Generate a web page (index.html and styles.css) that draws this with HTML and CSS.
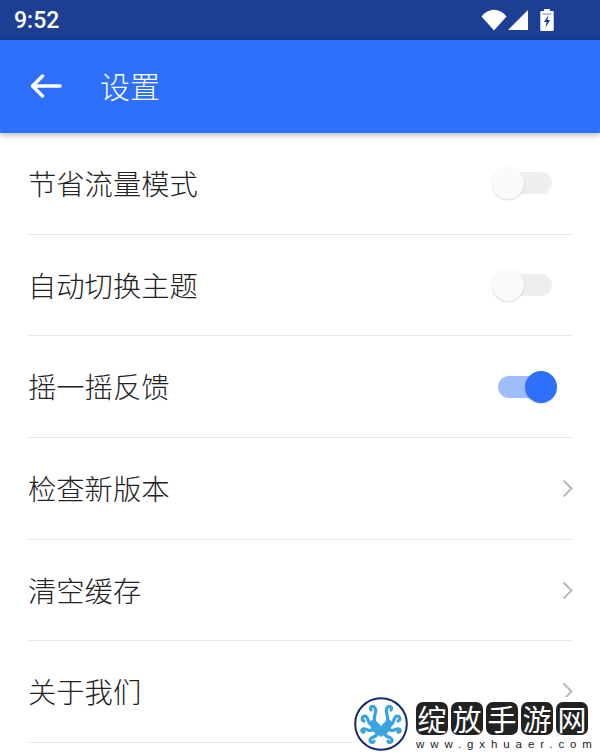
FILE: index.html
```html
<!DOCTYPE html>
<html lang="zh-CN">
<head>
    <meta charset="UTF-8">
    <meta name="viewport" content="width=device-width, initial-scale=1.0">
    <title>设置</title>
    <link rel="stylesheet" href="styles.css">
</head>
<body>
    <div class="screen">
        <div class="status-bar">
            <span class="time">9:52</span>
            <div class="status-icons">
                <svg class="icon-wifi" width="26" height="22" viewBox="0 0 26 22">
                    <path d="M0.5 7.5C7.5 -1.5 18.5 -1.5 25.5 7.5L13 21.5Z" fill="#fff"/>
                </svg>
                <svg class="icon-signal" width="22" height="22" viewBox="0 0 22 22">
                    <path d="M21 1V21H1Z" fill="#fff"/>
                </svg>
                <svg class="icon-battery" width="14" height="22" viewBox="0 0 14 23">
                    <path d="M4 0H10V2H13Q14 2 14 3V22Q14 23 13 23H1Q0 23 0 22V3Q0 2 1 2H4Z" fill="#fff"/>
                    <path d="M2.5 4.5H11.5V6H2.5Z" fill="#1c3f94" opacity="0.45"/>
                    <path d="M8.5 6.5L3.8 13.5H6.6L5.4 19.5L10.3 11.6H7.4Z" fill="#1c3f94"/>
                </svg>
            </div>
        </div>

        <div class="app-bar">
            <svg class="back" width="32" height="24" viewBox="0 0 32 24">
                <path d="M30 12H3M12.5 2L2.5 12L12.5 22" fill="none" stroke="#fff" stroke-width="3.4" stroke-linecap="round" stroke-linejoin="round"/>
            </svg>
            <h1 class="title">设置</h1>
        </div>

        <ul class="settings">
            <li class="row">
                <span class="label">节省流量模式</span>
                <span class="switch"><i class="track"></i><i class="thumb"></i></span>
            </li>
            <li class="row">
                <span class="label">自动切换主题</span>
                <span class="switch"><i class="track"></i><i class="thumb"></i></span>
            </li>
            <li class="row">
                <span class="label">摇一摇反馈</span>
                <span class="switch on"><i class="track"></i><i class="thumb"></i></span>
            </li>
            <li class="row">
                <span class="label">检查新版本</span>
                <svg class="chevron" width="11" height="19" viewBox="0 0 11 19"><path d="M1.5 1.5L9.5 9.5L1.5 17.5" fill="none" stroke="#b9b9b9" stroke-width="2"/></svg>
            </li>
            <li class="row">
                <span class="label">清空缓存</span>
                <svg class="chevron" width="11" height="19" viewBox="0 0 11 19"><path d="M1.5 1.5L9.5 9.5L1.5 17.5" fill="none" stroke="#b9b9b9" stroke-width="2"/></svg>
            </li>
            <li class="row">
                <span class="label">关于我们</span>
                <svg class="chevron" width="11" height="19" viewBox="0 0 11 19"><path d="M1.5 1.5L9.5 9.5L1.5 17.5" fill="none" stroke="#b9b9b9" stroke-width="2"/></svg>
            </li>
        </ul>

        <!-- site watermark sits over the list -->
        <div class="watermark">
            <svg class="mark-logo" width="54" height="54" viewBox="0 0 54 54">
                <circle cx="27" cy="27" r="25.8" fill="#fff" stroke="#14296b" stroke-width="2"/>
                <path d="M27 29C24 25 21 23 18 23C15 24 16 31 19 34C21 37 25 38 27 40C29 38 33 37 35 34C38 31 39 24 36 23C33 23 30 25 27 29Z" fill="#3ba3de"/>
                <g fill="none" stroke="#3ba3de" stroke-width="3.2" stroke-linecap="round">
                    <path d="M21 25C18 20 24 15 21 11C19 8 15 10 17 13"/>
                    <path d="M33 25C36 20 30 15 33 11C35 8 39 10 37 13"/>
                    <path d="M18 28C14 28 15 20 11 19C8 19 7 23 10 24"/>
                    <path d="M36 28C40 28 39 20 43 19C46 19 47 23 44 24"/>
                    <path d="M18 33C14 35 13 31 9 32C7 33 8 36 10 35"/>
                    <path d="M36 33C40 35 41 31 45 32C47 33 46 36 44 35"/>
                    <path d="M23 37C22 41 17 39 16 43C16 46 20 46 20 44"/>
                    <path d="M31 37C32 41 37 39 38 43C38 46 34 46 34 44"/>
                </g>
            </svg>
            <div class="mark-text">
                <div class="mark-tiles">
                    <span>绽</span><span>放</span><span>手</span><span>游</span><span>网</span>
                </div>
                <div class="mark-url">www.gxhuaer.com</div>
            </div>
        </div>
    </div>
</body>
</html>
```

FILE: styles.css
```css
* {
    box-sizing: border-box;
}
body {
    margin: 0;
    background-color: #fff;
    font-family: "Noto Sans CJK SC", "Noto Sans", sans-serif;
}
.screen {
    position: relative;
    width: 600px;
    height: 756px;
    overflow: hidden;
}
.status-bar {
    height: 40px;
    padding: 0 46px 0 14px;
    display: flex;
    align-items: center;
    justify-content: space-between;
    background-color: #1c3f94;
    color: #fff;
}
.time {
    font-family: Roboto, sans-serif;
    font-size: 23px;
    font-weight: 500;
}
.status-icons {
    display: flex;
    align-items: center;
}
.icon-battery {
    margin-left: 11px;
}
.app-bar {
    height: 93px;
    padding: 0 0 0 30px;
    display: flex;
    align-items: center;
    background-color: #2e6ffc;
    box-shadow: 0 2px 6px rgba(0, 0, 0, 0.3);
    position: relative;
}
.back {
    margin-top: -1px;
}
.title {
    margin: 0 0 3px 38px;
    color: #fff;
    font-size: 30px;
    font-weight: 300;
    line-height: 1;
}
.settings {
    list-style: none;
    margin: 0;
    padding: 0 28px;
}
.row {
    height: 101.7px;
    display: flex;
    align-items: center;
    justify-content: space-between;
    border-bottom: 1px solid #e8e8e8;
}
.label {
    margin-bottom: 2px;
    color: #222;
    font-size: 28.3px;
    font-weight: 300;
}
.chevron {
    margin-right: -1px;
}
.switch {
    position: relative;
    width: 65px;
    height: 32px;
    margin-right: 15px;
}
.track {
    position: absolute;
    left: 6px;
    top: 5px;
    width: 54px;
    height: 22px;
    border-radius: 11px;
    background-color: #eee;
}
.thumb {
    position: absolute;
    left: 0;
    top: 0;
    width: 32px;
    height: 32px;
    border-radius: 50%;
    background-color: #fafafa;
    box-shadow: 0 1px 2px rgba(0, 0, 0, 0.16);
}
.switch.on .track {
    background-color: #a0bdfb;
}
.switch.on .thumb {
    left: 33px;
    background-color: #2e6ffc;
}
.watermark {
    position: absolute;
    left: 352px;
    top: 697px;
    width: 248px;
    height: 59px;
    padding-left: 2px;
    display: flex;
    gap: 8px;
    background-color: #fff;
}
.mark-text {
    padding-top: 5px;
}
.mark-tiles {
    display: flex;
    gap: 3px;
}
.mark-tiles span {
    width: 32px;
    height: 33px;
    border-radius: 7px;
    background-color: #222;
    color: #fff;
    font-size: 29px;
    font-weight: 400;
    line-height: 32px;
    text-align: center;
}
.mark-url {
    margin-top: 3px;
    font-family: "Liberation Sans", sans-serif;
    font-size: 11.5px;
    line-height: 13px;
    letter-spacing: 5.9px;
    color: #222;
    white-space: nowrap;
}
```
